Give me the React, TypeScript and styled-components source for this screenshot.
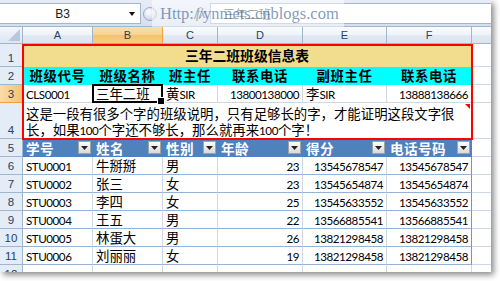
import React from 'react';
import styled, { createGlobalStyle } from 'styled-components';

const GlobalStyle = createGlobalStyle`
  html, body {
    margin: 0;
    padding: 0;
    background: #fff;
  }
  body {
    font-family: "Liberation Sans", "Noto Sans CJK SC", sans-serif;
  }
  * {
    box-sizing: border-box;
  }
`;

type Align = 'left' | 'center' | 'right';

interface PlaceProps {
  $r: number;
  $c: number;
  $span?: number;
  $rspan?: number;
}

interface CellProps extends PlaceProps {
  $align?: Align;
  $fill?: string;
  $bold?: boolean;
  $size?: number;
  $track?: number;
  $wrap?: boolean;
}

interface HeadProps extends PlaceProps {
  $active?: boolean;
}

const place = (p: PlaceProps) =>
  `grid-row: ${p.$r} / span ${p.$rspan ?? 1}; grid-column: ${p.$c} / span ${p.$span ?? 1};`;

const justify = (a?: Align) => (a === 'right' ? 'flex-end' : a === 'center' ? 'center' : 'flex-start');

const Stage = styled.div`
  width: 500px;
  height: 281px;
  overflow: hidden;
  background: #fff;
`;

const Window = styled.div`
  position: relative;
  width: 491px;
  height: 272px;
  overflow: hidden;
  display: flex;
  flex-direction: column;
  background: #fff;
  box-shadow: 3px 3px 6px rgba(0, 0, 0, 0.45);
`;

const FormulaBar = styled.div`
  flex: none;
  height: 27px;
  display: flex;
  padding: 3px 0 2px;
  background: linear-gradient(#e6edf7, #d5e0ee);
  border-bottom: 1px solid #9eb6ce;
`;

const NameBox = styled.div`
  width: 141px;
  display: flex;
  align-items: center;
  background: #fff;
  border: 1px solid #a5b5cb;
  border-left: none;
`;

const NameText = styled.span`
  flex: 1;
  text-align: center;
  font: 12px "Liberation Sans", sans-serif;
  color: #1b1b1b;
`;

const DropArrow = styled.svg`
  width: 15px;
  height: 6px;
  flex: none;
`;

const Knob = styled.div`
  align-self: center;
  width: 14px;
  height: 14px;
  margin: 0 4px 0 2px;
  border-radius: 50%;
  border: 1px solid #98a9c0;
  background: radial-gradient(circle at 40% 35%, #fff, #cfd8e4 70%);
`;

const FxZone = styled.div`
  flex: 0 0 49px;
  display: flex;
  align-items: center;
  justify-content: flex-end;
  padding-right: 4px;
  font: italic 14px "Liberation Serif", serif;
  color: #555;
`;

const FormulaInput = styled.div`
  flex: 1;
  display: flex;
  align-items: center;
  padding-left: 12px;
  background: #fff;
  border: 1px solid #a5b5cb;
  border-right: none;
  font: 12px "Noto Sans CJK SC", sans-serif;
  color: #555;
`;

const Watermark = styled.div`
  position: absolute;
  left: 152px;
  top: 0;
  width: 192px;
  height: 27px;
  display: flex;
  align-items: center;
  padding-left: 8px;
  background: rgba(255, 255, 255, 0.5);
  font: 16.5px "Liberation Serif", serif;
  color: rgba(60, 100, 150, 0.65);
  white-space: nowrap;
`;

const Sheet = styled.div`
  flex: none;
  display: grid;
  grid-template-columns: 23px 70px 70px 55px 85px 84px 85px 64px;
  grid-template-rows: 17px 23px 18px 18px 36px 18px repeat(7, 18px);
`;

const Corner = styled.div<PlaceProps>`
  ${place}
  display: flex;
  align-items: flex-end;
  justify-content: flex-end;
  padding: 0 2px 2px 0;
  background: linear-gradient(#f3f6fb, #dde6f2);
  border-right: 1px solid #9eb6ce;
  border-bottom: 1px solid #9eb6ce;
`;

const ColHead = styled.div<HeadProps>`
  ${place}
  display: flex;
  align-items: center;
  justify-content: center;
  font: 11px "Liberation Sans", sans-serif;
  color: #27415f;
  background: ${p =>
    p.$active
      ? 'linear-gradient(#f9dfae, #f7d38d 50%, #f3c26a 51%, #f6cf82)'
      : 'linear-gradient(#fafcfe, #eef3f9 50%, #e2e9f3 51%, #dbe3ee)'};
  border-right: 1px solid ${p => (p.$active ? '#f2a23b' : '#9eb6ce')};
  border-bottom: 1px solid ${p => (p.$active ? '#f29536' : '#9eb6ce')};
`;

const RowHead = styled.div<HeadProps>`
  ${place}
  display: flex;
  align-items: flex-end;
  justify-content: center;
  padding-bottom: 2px;
  font: 11.5px "Liberation Sans", sans-serif;
  color: #27415f;
  background: ${p => (p.$active ? 'linear-gradient(90deg, #f9dcaa, #f3c46c)' : '#e4ecf7')};
  border-right: 1px solid ${p => (p.$active ? '#f29536' : '#9eb6ce')};
  border-bottom: 1px solid ${p => (p.$active ? '#f2a23b' : '#9eb6ce')};
`;

const Cell = styled.div<CellProps>`
  ${place}
  position: relative;
  display: flex;
  align-items: flex-end;
  justify-content: ${p => justify(p.$align)};
  padding: 0 3px 1px;
  overflow: hidden;
  white-space: ${p => (p.$wrap ? 'normal' : 'nowrap')};
  background: ${p => p.$fill ?? '#fff'};
  border-right: 1px solid ${p => p.$fill ?? '#d0d7e5'};
  border-bottom: 1px solid ${p => p.$fill ?? '#d0d7e5'};
  font-family: "Noto Sans CJK SC", sans-serif;
  font-size: ${p => p.$size ?? 13.4}px;
  font-weight: ${p => (p.$bold ? 700 : 400)};
  letter-spacing: ${p => p.$track ?? 0}px;
  line-height: 16px;
  color: #000;
`;

const TCell = styled(Cell)<{ $edge?: boolean }>`
  border-bottom-color: #95b3d7;
  border-right-color: ${p => (p.$edge ? '#6f96c8' : '#d0d7e5')};
`;

const THead = styled.div<PlaceProps>`
  ${place}
  display: flex;
  align-items: center;
  justify-content: space-between;
  padding: 0 1px 0 3px;
  background: #4f81bd;
  border-right: 1px solid #4f81bd;
  border-bottom: 1px solid #4f81bd;
  color: #fff;
  font: 700 13.6px/16px "Noto Sans CJK SC", sans-serif;
  letter-spacing: 0.4px;
`;

const FilterBtn = styled.span`
  flex: none;
  width: 13px;
  height: 13px;
  display: flex;
  align-items: center;
  justify-content: center;
  background: linear-gradient(#fdfdfd, #d9d9d9);
  border: 1px solid #a3a3a3;
`;

const Lt = styled.span`
  font-family: Lato, "Liberation Sans", sans-serif;
  font-size: 11.6px;
  font-weight: 400;
  line-height: 1;
  letter-spacing: -0.45px;
`;

const Title = styled.span`
  display: block;
  padding-bottom: 2px;
`;

const Note = styled.span`
  display: block;
`;

const CommentMark = styled.span`
  position: absolute;
  top: 1px;
  right: 1px;
  width: 0;
  height: 0;
  border-top: 5px solid #ff0000;
  border-left: 5px solid transparent;
`;

const RedFrame = styled.div<PlaceProps>`
  ${place}
  z-index: 2;
  margin: 0 -1px -1px -1px;
  border: 2px solid #ff0000;
  pointer-events: none;
`;

const SelectBox = styled.div<PlaceProps>`
  ${place}
  position: relative;
  z-index: 3;
  margin: -1px 0 0 -1px;
  border: 2px solid #000;
  pointer-events: none;
  &::after {
    content: '';
    position: absolute;
    right: -4px;
    bottom: -4px;
    width: 6px;
    height: 6px;
    background: #000;
    border: 1px solid #fff;
  }
`;

const letters = ['A', 'B', 'C', 'D', 'E', 'F', ''];
const classHeads = ['班级代号', '班级名称', '班主任', '联系电话', '副班主任', '联系电话'];
const tableHeads = ['学号', '姓名', '性别', '年龄', '得分', '电话号码'];

const students = [
  ['STU0001', '牛掰掰', '男', '23', '13545678547', '13545678547'],
  ['STU0002', '张三', '女', '23', '13545654874', '13545654874'],
  ['STU0003', '李四', '女', '25', '13545633552', '13545633552'],
  ['STU0004', '王五', '男', '22', '13566885541', '13566885541'],
  ['STU0005', '林蛋大', '男', '26', '13821298458', '13821298458'],
  ['STU0006', '刘丽丽', '女', '19', '13821298458', '13821298458'],
];

const DownTri = () => (
  <svg width="7" height="4" viewBox="0 0 7 4">
    <polygon points="0,0 7,0 3.5,4" fill="#222" />
  </svg>
);

const App: React.FC = () => (
  <Stage>
    <GlobalStyle />
    <Window>
      <FormulaBar>
        <NameBox>
          <NameText>B3</NameText>
          <DropArrow viewBox="0 0 15 6">
            <polygon points="4,1 10,1 7,5" fill="#111" />
          </DropArrow>
        </NameBox>
        <Knob />
        <FxZone>fx</FxZone>
        <FormulaInput>三年二班</FormulaInput>
      </FormulaBar>
      <Watermark>Http://ynmets.cnblogs.com</Watermark>

      <Sheet>
        <Corner $r={1} $c={1}>
          <svg width="12" height="12" viewBox="0 0 12 12">
            <polygon points="12,0 12,12 0,12" fill="#b8c8dc" />
          </svg>
        </Corner>
        {letters.map((l, i) => (
          <ColHead key={i} $r={1} $c={i + 2} $active={l === 'B'}>
            {l}
          </ColHead>
        ))}
        {Array.from({ length: 12 }, (_, i) => (
          <RowHead key={i} $r={i + 2} $c={1} $active={i === 2}>
            {i + 1}
          </RowHead>
        ))}

        {/* row 1: title */}
        <Cell $r={2} $c={2} $span={6} $fill="#f2dc8e" $align="center" $bold $size={13.8}>
          <Title>三年二班班级信息表</Title>
        </Cell>

        {/* row 2: class headers */}
        {classHeads.map((h, i) => (
          <Cell key={i} $r={3} $c={i + 2} $fill="#00ffff" $align="center" $bold $size={13.4} $track={0.6}>
            {h}
          </Cell>
        ))}

        {/* row 3 */}
        <Cell $r={4} $c={2}><Lt>CLS0001</Lt></Cell>
        <Cell $r={4} $c={3}>三年二班</Cell>
        <Cell $r={4} $c={4}>黄<Lt>SIR</Lt></Cell>
        <Cell $r={4} $c={5} $align="right"><Lt>13800138000</Lt></Cell>
        <Cell $r={4} $c={6}>李<Lt>SIR</Lt></Cell>
        <Cell $r={4} $c={7} $align="right"><Lt>13888138666</Lt></Cell>

        {/* row 4: long wrapped note */}
        <Cell $r={5} $c={2} $span={6} $wrap>
          <Note>
            这是一段有很多个字的班级说明，只有足够长的字，才能证明这段文字很
            <br />
            长，如果<Lt>100</Lt>个字还不够长，那么就再来<Lt>100</Lt>个字！
          </Note>
          <CommentMark />
        </Cell>

        {/* row 5: table header */}
        {tableHeads.map((h, i) => (
          <THead key={h} $r={6} $c={i + 2}>
            {h}
            <FilterBtn>
              <DownTri />
            </FilterBtn>
          </THead>
        ))}

        {/* rows 6-11: students */}
        {students.map((s, r) =>
          s.map((v, c) => {
            const latin = c === 0 || c >= 3;
            return (
              <TCell key={`${r}-${c}`} $r={r + 7} $c={c + 2} $align={c >= 3 ? 'right' : 'left'} $edge={c === 5}>
                {latin ? <Lt>{v}</Lt> : v}
              </TCell>
            );
          })
        )}

        {/* row 12 */}
        {[2, 3, 4, 5, 6, 7].map(c => (
          <Cell key={c} $r={13} $c={c} />
        ))}

        {/* column G */}
        {Array.from({ length: 12 }, (_, i) => (
          <Cell key={`g${i}`} $r={i + 2} $c={8} />
        ))}

        <RedFrame $r={2} $c={2} $span={6} $rspan={4} />
        <SelectBox $r={4} $c={3} />
      </Sheet>
    </Window>
  </Stage>
);

export default App;
